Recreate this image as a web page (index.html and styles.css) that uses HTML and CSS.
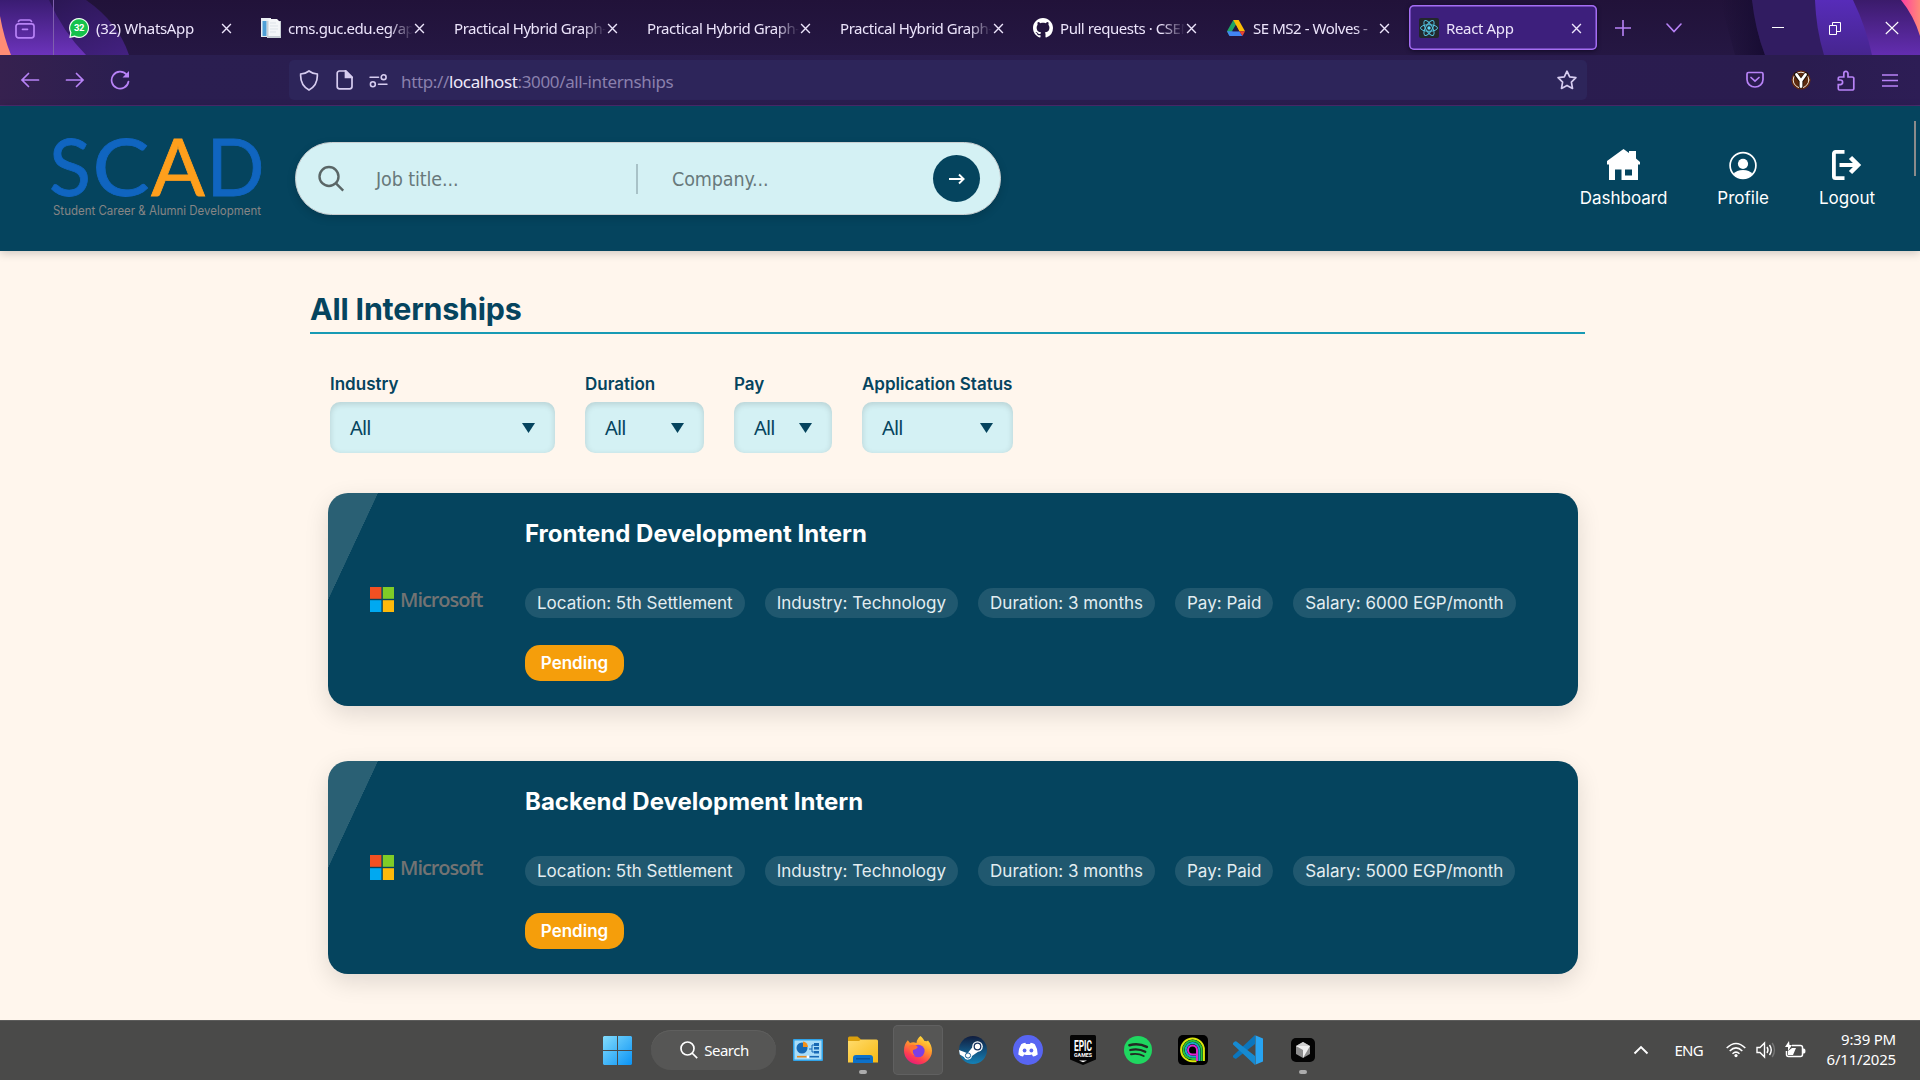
FILE: index.html
```html
<!DOCTYPE html>
<html lang="en">
<head>
<meta charset="utf-8">
<title>React App</title>
<link rel="stylesheet" href="styles.css">
</head>
<body>
<svg class="defs" width="0" height="0">
  <symbol id="close" viewBox="0 0 12 12"><path d="M1.2 1.2 10.8 10.8M10.8 1.2 1.2 10.8" stroke="#ece4fb" stroke-width="1.5" fill="none"/></symbol>
  <symbol id="caret" viewBox="0 0 13 10"><path d="M0 0h13L6.5 10z" fill="#05445e"/></symbol>
  <symbol id="ms" viewBox="0 0 24 25"><path fill="#f25022" d="M0 0h11.4v11.8H0z"/><path fill="#7fcc27" d="M12.8 0H24v11.8H12.800z"/><path fill="#00a9f1" d="M0 13.200h11.400V25H0z"/><path fill="#fdb90a" d="M12.800 13.200H24V25H12.800z"/></symbol>
</svg>

<div class="browser">
  <div class="tabbar">
    <svg class="theme" width="1920" height="55" viewBox="0 0 1920 55">
      <defs>
        <linearGradient id="pl" x1="0" y1="0" x2="0" y2="1"><stop offset="0" stop-color="#3a1c72"/><stop offset="1" stop-color="#6c33bb"/></linearGradient>
        <linearGradient id="pd" x1="0" y1="0" x2="1" y2="1"><stop offset="0" stop-color="#251449"/><stop offset="1" stop-color="#432181"/></linearGradient>
        <linearGradient id="pr" x1="0" y1="0" x2="0" y2="1"><stop offset="0" stop-color="#3b1b6b"/><stop offset="1" stop-color="#632db0"/></linearGradient>
        <linearGradient id="pm" x1="0" y1="0" x2="0" y2="1"><stop offset="0" stop-color="#572cb9"/><stop offset="1" stop-color="#46258f"/></linearGradient>
        <linearGradient id="sh" x1="0" x2="1"><stop offset="0" stop-color="#180d31" stop-opacity="0"/><stop offset="1" stop-color="#170c33"/></linearGradient>
        <linearGradient id="pk" x1="0" x2="1"><stop offset="0" stop-color="#ff3fa0"/><stop offset="1" stop-color="#ff8a78"/></linearGradient>
      </defs>
      <path d="M0 0h86q32 22 43 55H0z" fill="url(#pd)"/>
      <path d="M0 0h49q14 32 37 55H0z" fill="url(#pl)"/>
      <path d="M0 16q4 22 11 39H0z" fill="#ff8d75"/>
      <path d="M1720 0h32q4 32 13 55h-30z" fill="url(#sh)"/>
      <path d="M1752 0h168v55h-155q-10-26-13-55z" fill="#311c61"/>
      <path d="M1815 0h105v55h-96q-8-26-9-55z" fill="url(#pm)"/>
      <path d="M1853 0h67v55h-48q-6-28-19-55z" fill="url(#pr)"/>
      <path d="M1901 0h19v36q-6-20-19-36z" fill="url(#pk)"/>
    </svg>
    <div class="viewbtn">
      <svg width="20" height="20" viewBox="0 0 20 20" fill="none" stroke="#b883f7" stroke-width="1.7" stroke-linecap="round"><path d="M3.500 2.500Q4 1 5.500 1h9Q16 1 16.500 2.500"/><rect x="1" y="4.800" width="18" height="14" rx="2.500"/><path d="M7.500 10.300h5"/></svg>
    </div>
    <div class="tabs">
      <div class="tab">
        <svg class="fav" viewBox="0 0 20 20"><path d="M10 0a10 10 0 1 1-4.500 18.900L.3 20l.9-5.300A10 10 0 0 1 10 0z" fill="#f2fff5"/><path d="M10 1.200a8.800 8.800 0 1 1-4.300 16.400L1.700 18.500l.8-4A8.800 8.800 0 0 1 10 1.200z" fill="#16c24b"/><text x="10" y="13.400" text-anchor="middle" font-family="Roboto" font-size="9.500" font-weight="700" fill="#fff">32</text></svg>
        <span class="tt">(32) WhatsApp</span><svg class="x"><use href="#close"/></svg>
      </div>
      <div class="tab">
        <svg class="fav" viewBox="0 0 20 20"><path d="M0 0h10v19H0z" fill="#e9eef2"/><path d="M1.500 3h4v15h-4z" fill="#4f9fd6"/><path d="M6 3h14v17H6z" fill="#c7ced4"/><path d="M7.500 1H16l3 3v14H7.500z" fill="#f4f6f8"/><path d="M9 5h6M9 8h8M9 11h8M9 14h6" stroke="#dde3e9"/></svg>
        <span class="tt">cms.guc.edu.eg/apps</span><svg class="x"><use href="#close"/></svg>
      </div>
      <div class="tab"><span class="tt">Practical Hybrid Graph-</span><svg class="x"><use href="#close"/></svg></div>
      <div class="tab"><span class="tt">Practical Hybrid Graph-</span><svg class="x"><use href="#close"/></svg></div>
      <div class="tab"><span class="tt">Practical Hybrid Graph-</span><svg class="x"><use href="#close"/></svg></div>
      <div class="tab">
        <svg class="fav" viewBox="0 0 16 16"><path fill="#fff" d="M8 0C3.580 0 0 3.580 0 8c0 3.540 2.290 6.530 5.470 7.590.4.070.55-.17.55-.38 0-.19-.01-.82-.01-1.490-2.010.37-2.530-.49-2.690-.94-.09-.23-.48-.94-.82-1.130-.28-.15-.68-.52-.01-.53.63-.01 1.080.58 1.230.82.72 1.210 1.870.87 2.330.66.07-.52.28-.87.51-1.070-1.780-.2-3.640-.89-3.640-3.950 0-.87.31-1.590.82-2.150-.08-.2-.36-1.020.08-2.120 0 0 .67-.21 2.200.82.64-.18 1.320-.27 2-.27s1.360.09 2 .27c1.530-1.040 2.200-.82 2.200-.82.44 1.100.16 1.920.08 2.120.51.56.82 1.270.82 2.150 0 3.070-1.870 3.750-3.650 3.950.29.25.54.73.54 1.480 0 1.070-.01 1.930-.01 2.200 0 .21.15.46.55.38A8.010 8.010 0 0 0 16 8c0-4.420-3.580-8-8-8z"/></svg>
        <span class="tt">Pull requests · CSEN</span><svg class="x"><use href="#close"/></svg>
      </div>
      <div class="tab">
        <svg class="fav" viewBox="0 0 20 20"><path d="M7.300 2h5.400L5.700 13.800 3.400 18 1 13.200z" fill="#1fa463"/><path d="M7.300 2h5.400l6.300 11.200h-5.700z" fill="#fbbc04"/><path d="M1 13.200h12.300L16.500 18h-13z" fill="#4285f4"/><path d="M13.300 13.200H19L16.500 18z" fill="#ea4335"/><path d="M10 7.800l2.900 5.400H6.700z" fill="#241740"/></svg>
        <span class="tt">SE MS2 - Wolves -&nbsp;</span><svg class="x"><use href="#close"/></svg>
      </div>
      <div class="tab active">
        <svg class="fav" viewBox="0 0 20 20"><rect width="20" height="20" rx="2" fill="#22272c"/><g fill="none" stroke="#53c1de" stroke-width="1"><ellipse cx="10" cy="10" rx="8.500" ry="3.300"/><ellipse cx="10" cy="10" rx="8.500" ry="3.300" transform="rotate(60 10 10)"/><ellipse cx="10" cy="10" rx="8.500" ry="3.300" transform="rotate(120 10 10)"/></g><circle cx="10" cy="10" r="1.700" fill="#61dafb"/></svg>
        <span class="tt">React App</span><svg class="x"><use href="#close"/></svg>
      </div>
    </div>
    <svg class="plus" width="16" height="16" viewBox="0 0 16 16"><path d="M8 .5v15M.5 8h15" stroke="#b883f7" stroke-width="1.600" stroke-linecap="round"/></svg>
    <svg class="chev" width="16" height="10" viewBox="0 0 16 10"><path d="M1 1l7 7.500L15 1" stroke="#b883f7" stroke-width="1.600" fill="none" stroke-linecap="round"/></svg>
    <div class="winbtns">
      <svg width="14" height="14" viewBox="0 0 14 14"><path d="M1 6.500h12" stroke="#fff" stroke-width="1"/></svg>
      <svg width="14" height="14" viewBox="0 0 14 14" fill="none" stroke="#fff" stroke-width="1"><path d="M1.500 4.500h7v9h-7zM4.500 4.500v-3h8v9h-4"/></svg>
      <svg width="14" height="14" viewBox="0 0 14 14"><path d="M.8 1l12.400 12M13.200 1L.8 13" stroke="#fff" stroke-width="1.100"/></svg>
    </div>
  </div>
  <div class="toolbar">
    <div class="navbtns">
      <svg width="20" height="20" viewBox="0 0 20 20"><path d="M18.500 10H2M8.500 3.500L2 10l6.500 6.500"/></svg>
      <svg width="20" height="20" viewBox="0 0 20 20"><path d="M1.500 10H18M11.500 3.500L18 10l-6.500 6.500"/></svg>
      <svg width="20" height="20" viewBox="0 0 20 20"><path d="M18.500 11.500A8.500 8.500 0 1 1 16.500 4.500l1.500 1.600"/><path d="M19 1v6.500h-6.500z" fill="#b883f7" stroke="none"/></svg>
    </div>
    <div class="urlbar">
      <svg width="20" height="21" viewBox="0 0 20 21"><path d="M10 1c2.500 2 5.500 2.800 8.300 3 .5 7-2 12.500-8.300 16C3.700 16.500 1.200 11 1.700 4 4.500 3.800 7.500 3 10 1z"/></svg>
      <svg width="17" height="20" viewBox="0 0 17 20"><path d="M3.500 1H10l6 6v9.500a2.300 2.300 0 0 1-2.300 2.300H3.500A2.300 2.300 0 0 1 1.200 16.500v-13A2.300 2.300 0 0 1 3.500 1z"/><path d="M9.500 1v6.500H16z" fill="#d7cdf0"/></svg>
      <svg width="19" height="15" viewBox="0 0 20 16"><path d="M1 4.500h9M10 12h9"/><circle cx="15.500" cy="4.500" r="2.600"/><circle cx="4" cy="12" r="2.600"/></svg>
      <span class="url">http://<b>localhost</b>:3000/all-internships</span>
      <svg class="star" width="20" height="20" viewBox="0 0 20 20"><path d="M10 1.200l2.700 5.700 6.200.8-4.500 4.400 1.100 6.300L10 15.400l-5.500 3 1.100-6.300L1.100 7.700l6.200-.8z" stroke-linejoin="round"/></svg>
    </div>
    <div class="ext">
      <svg width="18" height="18" viewBox="0 0 18 18"><path d="M2.500 1.500h13A1.500 1.500 0 0 1 17 3v5.500a8 7.500 0 0 1-16 0V3a1.500 1.500 0 0 1 1.500-1.500zM5 6.500L9 10.200l4-3.700"/></svg>
      <svg width="20" height="20" viewBox="0 0 20 20"><circle cx="10" cy="10" r="9.600" fill="#662b10" stroke="none"/><circle cx="10" cy="10" r="7.800" fill="#5c2a0f" stroke="#eee4da" stroke-width="1"/><path d="M5 4.500L10 10.800l5-6.300M10 10v6.500" stroke="#1d0d06" stroke-width="4.500"/><path d="M5.500 4.500L10 10.800l4.500-6.300M10 10v6.500" stroke="#fff" stroke-width="2.800"/></svg>
      <svg width="18" height="21" viewBox="0 0 18 21"><path d="M2.500 20h12.800a1.500 1.500 0 0 0 1.500-1.500V8.500A1.500 1.500 0 0 0 15.300 7H11V3.500a2 2 0 0 0-4.200 0V7H2.500A1.200 1.200 0 0 0 1.300 8.200V10h2a2.300 2.300 0 0 1 0 4.600h-2v4.200A1.200 1.200 0 0 0 2.500 20z"/></svg>
      <svg width="16" height="13" viewBox="0 0 16 13"><path d="M.5 1h15M.5 6.500h15M.5 12h15"/></svg>
    </div>
  </div>
</div>

<header class="header">
  <svg class="logo" width="214" height="84" viewBox="0 0 214 84">
    <g font-family="Lato" font-size="79" fill="#1065c0" stroke="#1065c0" stroke-width=".8">
      <text x="-2" y="58" textLength="42" lengthAdjust="spacingAndGlyphs">S</text>
      <text x="41.500" y="58" textLength="57" lengthAdjust="spacingAndGlyphs">C</text>
      <text x="155.500" y="58" textLength="58" lengthAdjust="spacingAndGlyphs">D</text>
      <text x="100" y="58" textLength="54" lengthAdjust="spacingAndGlyphs" fill="#ff9f1c" stroke="#ff9f1c">A</text>
    </g>
    <text x="2" y="77" font-family="Inter" font-size="12.500" fill="#858585" textLength="208" lengthAdjust="spacingAndGlyphs">Student Career &amp; Alumni Development</text>
  </svg>
  <div class="search">
    <svg width="27" height="27" viewBox="0 0 27 27" fill="none" stroke="#5a6666" stroke-width="2.400"><circle cx="11" cy="11.500" r="9.500"/><path d="M18.200 18.700l7 7"/></svg>
    <span class="ph job">Job title...</span>
    <i class="divider"></i>
    <span class="ph company">Company...</span>
    <div class="go"><svg width="16" height="12" viewBox="0 0 16 12"><path d="M0 6h14.500M10 1.500L14.600 6 10 10.500" stroke="#fff" stroke-width="1.900" fill="none"/></svg></div>
  </div>
  <nav class="nav">
    <a><svg width="33" height="33" viewBox="0 0 33 33"><path d="M16.500 1L22 5V3h7v7.500l4 3.500v2.500h-2V32H2V16.500H0V13z" fill="#fff"/><path d="M8 21.500h6.500V32H8zM18 21.500h7v6h-7z" fill="#05445e"/></svg>Dashboard</a>
    <a><svg width="33" height="33" viewBox="0 0 33 33"><circle cx="16" cy="17.500" r="12.900" fill="none" stroke="#fff" stroke-width="1.700"/><circle cx="16" cy="15.800" r="5.100" fill="#fff"/><path d="M6.500 26q3-4 9.500-4t9.500 4q-4 4.800-9.500 4.800T6.500 26z" fill="#fff"/></svg>Profile</a>
    <a><svg width="33" height="33" viewBox="0 0 33 33" fill="none" stroke="#fff" stroke-width="3.800"><path d="M14.500 3.900H5.500a1.600 1.600 0 0 0-1.600 1.600v23a1.600 1.600 0 0 0 1.600 1.600h9M9.500 17h18"/><path d="M20.500 9.500l7.500 7.500-7.500 7.500" stroke-width="4.500"/></svg>Logout</a>
  </nav>
  <i class="thumb"></i>
</header>

<main class="page">
  <h1>All Internships</h1>
  <div class="filters">
    <div class="filter f1"><label>Industry</label><div class="select">All<svg width="13" height="10"><use href="#caret"/></svg></div></div>
    <div class="filter f2"><label>Duration</label><div class="select">All<svg width="13" height="10"><use href="#caret"/></svg></div></div>
    <div class="filter f3"><label>Pay</label><div class="select">All<svg width="13" height="10"><use href="#caret"/></svg></div></div>
    <div class="filter f4"><label>Application Status</label><div class="select">All<svg width="13" height="10"><use href="#caret"/></svg></div></div>
  </div>

  <article class="card">
    <div class="company-logo"><svg width="24" height="25"><use href="#ms"/></svg><span>Microsoft</span></div>
    <div class="info">
      <h2>Frontend Development Intern</h2>
      <div class="pills"><span>Location: 5th Settlement</span><span>Industry: Technology</span><span>Duration: 3 months</span><span>Pay: Paid</span><span>Salary: 6000 EGP/month</span></div>
      <div class="status">Pending</div>
    </div>
  </article>
  <article class="card">
    <div class="company-logo"><svg width="24" height="25"><use href="#ms"/></svg><span>Microsoft</span></div>
    <div class="info">
      <h2>Backend Development Intern</h2>
      <div class="pills"><span>Location: 5th Settlement</span><span>Industry: Technology</span><span>Duration: 3 months</span><span>Pay: Paid</span><span>Salary: 5000 EGP/month</span></div>
      <div class="status">Pending</div>
    </div>
  </article>
</main>

<footer class="taskbar">
  <div class="start"><svg width="29" height="29" viewBox="0 0 29 29"><defs><linearGradient id="wn" x1="0" y1="0" x2="1" y2="1"><stop offset="0" stop-color="#83dcfc"/><stop offset="1" stop-color="#0a93f5"/></linearGradient></defs><path d="M1 0h13v14H0V1zM15 0h13l1 1v13H15zM0 15h14v14H1l-1-1zM15 15h14v13l-1 1H15z" fill="url(#wn)"/></svg></div>
  <div class="tsearch"><svg width="18" height="18" viewBox="0 0 18 18" fill="none" stroke="#fff" stroke-width="1.700"><circle cx="7.500" cy="7.500" r="6.500"/><path d="M12 12l5.200 5.200"/></svg>Search</div>
  <div class="apps">
    <div class="app"><svg width="30" height="22" viewBox="0 0 30 22"><rect width="30" height="22" rx="1" fill="#30a3e8"/><rect x="1.500" y="1.500" width="27" height="19" fill="#a9ddf9"/><circle cx="9" cy="9" r="5.500" fill="#1769b5"/><path d="M10 8V2.500A5.500 5.500 0 0 1 15 8z" fill="#f59019"/><path d="M16 10h3V6h3M19 10v3h3" stroke="#1769b5" fill="none"/><path d="M21 4h5v3h-5zM21 8h5v2.500h-5zM21 12h5v2.500h-5z" fill="#1769b5"/><path d="M4 17.700h10" stroke="#e8891c" stroke-width="1.600"/><path d="M14 17.700h12" stroke="#1769b5" stroke-width="1.600"/><circle cx="15" cy="17.700" r="1.500" fill="#fff"/></svg></div>
    <div class="app run"><svg width="30" height="28" viewBox="0 0 30 28"><defs><linearGradient id="fo" x1="0" y1="0" x2="1" y2="1"><stop offset="0" stop-color="#ffdc6d"/><stop offset="1" stop-color="#f8b912"/></linearGradient></defs><path d="M0 2q0-1.500 1.500-1.500h8L13 3.500V8H0z" fill="#dba00d"/><path d="M0 5h11l2-1.500h15.500Q30 3.500 30 5v21.500H0z" fill="url(#fo)"/><path d="M5 27v-5q0-3 3-3h14q3 0 3 3v5z" fill="#0d71c9"/><path d="M8 22.800h14" stroke="#0b4e97" stroke-width="1.300"/></svg></div>
    <div class="app current"><svg width="30" height="30" viewBox="0 0 30 30"><defs><linearGradient id="ff" x1=".8" y1="0" x2=".3" y2="1"><stop offset="0" stop-color="#ffe840"/><stop offset=".4" stop-color="#ff9a2b"/><stop offset=".75" stop-color="#ff3f4f"/><stop offset="1" stop-color="#e51a7b"/></linearGradient></defs><path d="M17.500 1c2 1.500 3 3.500 4 5 1 0 3 .5 3.500-.5 2.500 3 4 6.500 4 10.200A14 13.800 0 0 1 1 15.500C1 11 2.500 7.500 4.800 5.200L7 8c2-1 4.500-1 6.500 0 .2-3 2-5.500 4-7z" fill="url(#ff)"/><circle cx="15.300" cy="16" r="6.300" fill="#7b3fe4"/><path d="M6 11q5-3 9 1-2 3-5 3-1 4 3 6-6-1-7-10z" fill="#ff6f33"/></svg></div>
    <div class="app"><svg width="28" height="28" viewBox="0 0 28 28"><defs><linearGradient id="st" x1="0" y1="0" x2="0" y2="1"><stop offset="0" stop-color="#111d3e"/><stop offset="1" stop-color="#1482b8"/></linearGradient></defs><circle cx="14" cy="14" r="14" fill="url(#st)"/><path d="M0 14l8.500 3.300L14 10.500l5.500 5-6.500 4.500a4.300 4.300 0 0 1-8.200 1L.8 18.500z" fill="#fff"/><circle cx="18.500" cy="10.500" r="5.300" fill="#fff"/><circle cx="18.500" cy="10.500" r="3.300" fill="#fff" stroke="#16335e" stroke-width="1.300"/><circle cx="9" cy="19.500" r="2.600" fill="#fff" stroke="#1a5f91"/></svg></div>
    <div class="app"><svg width="30" height="30" viewBox="0 0 30 30"><circle cx="15" cy="15" r="15" fill="#5865f2"/><path d="M8.200 9.300Q10 8.200 12.300 7.800l.7 1.200h4l.7-1.200q2.300.4 4.100 1.500 3 4.600 2.900 10.200-2.500 1.800-4.700 2l-1.100-1.900q-3.900 1-7.800 0L10 21.500q-2.200-.2-4.700-2Q5.200 13.900 8.200 9.300z" fill="#fff"/><circle cx="11.600" cy="15.500" r="1.900" fill="#5865f2"/><circle cx="18.400" cy="15.500" r="1.900" fill="#5865f2"/></svg></div>
    <div class="app"><svg width="26" height="30" viewBox="0 0 26 30"><path d="M1.500 0h23Q26 0 26 1.500V24.500L13 30 0 24.500V1.500Q0 0 1.500 0z" fill="#050505"/><text x="4" y="15.700" font-family="Roboto" font-size="15" font-weight="700" fill="#fff" textLength="18" lengthAdjust="spacingAndGlyphs">EPIC</text><text x="4" y="22" font-family="Roboto" font-size="5.500" font-weight="700" fill="#fff" textLength="18" lengthAdjust="spacingAndGlyphs">GAMES</text><path d="M9 25.500h8l-4 1.800z" fill="#fff"/></svg></div>
    <div class="app"><svg width="28" height="28" viewBox="0 0 28 28"><circle cx="14" cy="14" r="14" fill="#1fd760"/><g fill="none" stroke="#222a24" stroke-linecap="round"><path d="M5.500 9.200q9-2.500 17.300 1.700" stroke-width="2.700"/><path d="M6.300 14q8-2 15 1.700" stroke-width="2.300"/><path d="M7 18.300q7-1.400 12.700 1.700" stroke-width="1.900"/></g></svg></div>
    <div class="app"><svg width="30" height="30" viewBox="0 0 30 30"><rect width="30" height="30" rx="5" fill="#000"/><g fill="none" stroke-width="2"><path d="M25.900 26V15A11.400 11.400 0 1 0 14.500 26.200h4" stroke="#d9e70c"/><path d="M23.600 26V15A9.100 9.100 0 1 0 14.500 24h4" stroke="#28c53a"/><path d="M21.300 26V15a6.800 6.800 0 1 0-6.800 6.700h4" stroke="#17a9c9"/><path d="M19 26V15a4.500 4.500 0 1 0-4.500 4.500h4" stroke="#dd27d1"/></g></svg></div>
    <div class="app"><svg width="30" height="30" viewBox="0 0 30 30"><path d="M22 0L0 20.700q-.5 1 .3 1.700l1.500 1.200q.8.500 1.700 0L22 9z" fill="#0b76bd"/><path d="M22 30L0 9.500q-.5-1 .3-1.700l1.500-1.400q.8-.5 1.700 0L22 21z" fill="#168ad1"/><path d="M21.500 0L30 3.500v23L21.500 30q1 .2 1-1.500v-27q0-1.700-1-1.500z" fill="#27a4f2"/></svg></div>
    <div class="app run"><svg width="24" height="24" viewBox="0 0 24 24"><rect width="24" height="24" rx="5" fill="#040404"/><path d="M12 4l7 4v8l-7 4-7-4V8z" fill="#8d8d8d"/><path d="M12 4l7 4-7 2-7-2z" fill="#d0d0d0"/><path d="M5 8h14l-7 12v-8z" fill="#efefef"/></svg></div>
  </div>
  <div class="tray">
    <svg class="up" width="16" height="10" viewBox="0 0 16 10"><path d="M1.500 8.500L8 2l6.500 6.500" stroke="#fff" stroke-width="1.900" fill="none"/></svg>
    <span class="lang">ENG</span>
    <svg class="wifi" width="20" height="16" viewBox="0 0 20 16" fill="none" stroke="#fff" stroke-width="1.500"><path d="M.7 6Q10-3 19.300 6M3.700 9Q10 2.800 16.300 9M6.500 11.700Q10 8.500 13.500 11.700"/><circle cx="10" cy="13.600" r="1.600" fill="#fff" stroke="none"/></svg>
    <svg class="vol" width="20" height="18" viewBox="0 0 20 18" fill="none" stroke="#fff" stroke-width="1.400"><path d="M1 6.500h3L8.500 2v14L4 11.500H1z"/><path d="M11 6q2 3 0 6M13.500 4q3.500 5 0 10"/><path d="M16.200 2q4.500 7 0 14" stroke="#777"/></svg>
    <svg class="bat" width="21" height="18" viewBox="0 0 21 18"><path d="M7 4.500h8.500a2 2 0 0 1 2 2v7a2 2 0 0 1-2 2H3.500a2 2 0 0 1-2-2V10" fill="none" stroke="#fff" stroke-width="1.500"/><path d="M18 7.500h1q1.500 0 1.500 2.500T19 12.500h-1zM3 14v-4l4-3h4l-3 7z" fill="#fff"/><path d="M4 0L0 6h3v4l4-6H4.500z" fill="#fff"/></svg>
    <div class="clock"><div>9:39 PM</div><div>6/11/2025</div></div>
  </div>
</footer>
</body>
</html>
```
FILE: styles.css
```css
* { box-sizing: border-box; }
body {
  margin: 0;
  width: 1920px;
  height: 1080px;
  overflow: hidden;
  display: flex;
  flex-direction: column;
  background: #fff6ed;
  font-family: Inter, sans-serif;
}
.defs { position: absolute; }
svg { display: block; flex: none; }

/* browser chrome */
.browser { font-family: "Noto Sans", sans-serif; height: 106px; flex: none; }
.tabbar {
  position: relative;
  height: 55px;
  display: flex;
  align-items: center;
  background: linear-gradient(#211239, #251743);
}
.theme { position: absolute; inset: 0; }
.tabbar > :not(.theme) { position: relative; }
.viewbtn { width: 54px; height: 55px; padding: 19px 0 0 15px; border-right: 1px solid #7f5fae; }
.tabs { display: flex; gap: 5px; margin-left: 4px; }
.tab {
  width: 188px;
  height: 45px;
  padding: 1px 14px 0 10px;
  display: flex;
  align-items: center;
  border-radius: 5px;
  color: #ece4fb;
  font-size: 15px;
  letter-spacing: -.45px;
}
.tab:first-child { padding-left: 11px; letter-spacing: -.35px; }
.tab.active { padding-right: 15px; letter-spacing: -.35px; background: #3d1f7c; box-shadow: inset 0 0 0 1.500px #a56ef3, 0 1px 4px #120a26; }
.fav { width: 20px; height: 20px; margin-right: 7px; }
.tt {
  flex: 1;
  min-width: 0;
  overflow: hidden;
  white-space: nowrap;
  -webkit-mask-image: linear-gradient(90deg, #000 calc(100% - 24px), transparent calc(100% - 1px));
  mask-image: linear-gradient(90deg, #000 calc(100% - 24px), transparent calc(100% - 1px));
}
.x { width: 11px; height: 11px; }
.plus { margin-left: 18px; }
.chev { margin-left: 35px; }
.winbtns { display: flex; gap: 43px; margin-left: 89px; }
.toolbar {
  height: 51px;
  display: flex;
  align-items: center;
  background: linear-gradient(90deg, #36214f 0, #2a1e50 130px, #2a1c4f 1800px, #2d1d55);
  border-bottom: 1px solid #4b2a6e;
}
.toolbar svg { fill: none; stroke: #b883f7; stroke-width: 1.700; stroke-linecap: round; }
.navbtns { width: 289px; display: flex; gap: 25px; padding-left: 20px; }
.urlbar {
  width: 1298px;
  height: 40px;
  padding: 0 10px;
  border-radius: 5px;
  background: #2d255a;
  display: flex;
  align-items: center;
}
.urlbar svg { stroke: #d7cdf0; margin-right: 16.500px; }
.urlbar svg:nth-child(3) { margin-right: 13px; }
.url { flex: 1; padding-top: 3px; color: #8a80ad; font-size: 17px; letter-spacing: -.36px; }
.url b { font-weight: 400; color: #efe9fb; }
.urlbar .star { margin: 0; }
.ext { display: flex; align-items: center; gap: 26.500px; margin-left: 159px; }

/* site header */
.header {
  position: relative;
  height: 145px;
  flex: none;
  background: #05445e;
  box-shadow: 0 2px 9px rgba(0,0,0,.2);
  display: flex;
  align-items: center;
  padding: 0 45px 0 51px;
}
.logo { margin-top: 2px; overflow: visible; }
.search {
  width: 706px;
  height: 73px;
  margin-left: 30px;
  padding: 0 20px 0 22px;
  border: 1px solid #c9ced0;
  border-radius: 37px;
  background: #d4f1f4;
  box-shadow: 0 3px 8px rgba(0,0,0,.15);
  display: flex;
  align-items: center;
}
.ph { padding-top: 2px; font-family: "DejaVu Sans Condensed", "DejaVu Sans", sans-serif; font-stretch: condensed; font-size: 19.500px; letter-spacing: -.1px; color: #68797b; }
.job { width: 260px; margin-left: 31px; }
.divider { width: 2px; height: 30px; background: #a8c2c7; }
.company { flex: 1; margin-left: 34px; }
.go { width: 47px; height: 47px; border-radius: 50%; background: #05445e; display: grid; place-items: center; }
.nav { display: flex; gap: 50px; margin-left: auto; }
.nav a {
  display: flex;
  flex-direction: column;
  align-items: center;
  gap: 6px;
  color: #fff;
  font-size: 17px;
  line-height: 22px;
}
.thumb { position: absolute; left: 1914px; top: 15px; width: 2px; height: 55px; background: #8b8b8b; }

/* listing */
.page { width: 1275px; margin-left: 310px; flex: 1 1 0; min-height: 0; padding-top: 34px; }
h1 {
  margin: 0;
  height: 49px;
  border-bottom: 2px solid #189ab4;
  color: #05445e;
  font-size: 30.400px;
  line-height: 48px;
  letter-spacing: -.2px;
}
.filters { display: flex; gap: 30px; padding: 39px 0 0 20px; margin-bottom: 40px; }
.filter label { display: block; color: #05445e; font-size: 17px; font-weight: 600; line-height: 22px; white-space: nowrap; margin-bottom: 7px; }
.f1 { width: 225px; }
.f2 { width: 119px; }
.f3 { width: 98px; }
.f4 { width: 151px; }
.select {
  height: 51px;
  padding: 0 20px;
  border-radius: 10px;
  background: #d4f1f4;
  box-shadow: inset 0 2px 6px rgba(0,0,0,.14);
  display: flex;
  align-items: center;
  justify-content: space-between;
  font: 20px "Noto Sans", sans-serif;
  letter-spacing: -.9px;
  color: #05445e;
}
.card {
  width: 1250px;
  height: 213px;
  margin: 0 0 55px 18px;
  padding-left: 42px;
  border-radius: 20px;
  background: linear-gradient(to bottom right, #2a6074 49.800%, transparent 50.200%) 0 0 / 50px 107px no-repeat, #05445e;
  box-shadow: 0 8px 24px rgba(0,0,0,.12);
  display: flex;
}
.company-logo {
  width: 155px;
  padding-top: 94px;
  display: flex;
  align-items: flex-start;
  gap: 6px;
  color: #737373;
  font: 600 20px/26px "Open Sans", sans-serif;
  letter-spacing: -1.050px;
}
h2 { margin: 0; padding-top: 26px; color: #fff; font-size: 24px; line-height: 30px; }
.pills { display: flex; gap: 20px; margin-top: 39px; }
.pills span {
  height: 30px;
  padding: 0 12px;
  border-radius: 15px;
  background: #20586f;
  color: #e3edf1;
  font-size: 17px;
  line-height: 30px;
  letter-spacing: .004px;
  white-space: nowrap;
}
.status {
  width: 99px;
  height: 36px;
  margin-top: 27px;
  border-radius: 15px;
  background: #f59e0b;
  color: #fff;
  font-size: 17px;
  font-weight: 600;
  line-height: 36px;
  text-align: center;
}

/* desktop taskbar */
.taskbar {
  height: 60px;
  flex: none;
  background: #4a4a49;
  box-shadow: inset 0 1px #5c5c5b;
  position: relative;
  display: flex;
  align-items: center;
  padding-left: 603px;
  color: #fff;
  font: 15px "Noto Sans", sans-serif;
}
.tsearch {
  width: 125px;
  height: 40px;
  margin: 0 4px 0 19px;
  border-radius: 20px;
  background: #565655;
  box-shadow: inset 0 1px #5f5f5e;
  display: flex;
  align-items: center;
  justify-content: center;
  gap: 6px;
  padding-left: 2px;
  letter-spacing: -.5px;
}
.apps { display: flex; gap: 5px; margin-left: 3px; }
.app { position: relative; width: 50px; height: 50px; display: grid; place-items: center; border-radius: 5px; }
.app.current { background: #565655; box-shadow: inset 0 0 0 1px #606060; }
.app.run::after { content: ""; position: absolute; left: 21px; bottom: 1px; width: 8px; height: 4px; border-radius: 2px; background: #acacac; }
.tray { display: flex; align-items: center; margin-left: auto; padding-right: 24px; }
.lang { margin: 0 23px 0 25px; letter-spacing: -.7px; }
.vol { margin-left: 10px; }
.bat { margin-left: 9px; }
.clock { width: 90px; text-align: right; line-height: 20px; letter-spacing: -.2px; padding-bottom: 3px; }
```
